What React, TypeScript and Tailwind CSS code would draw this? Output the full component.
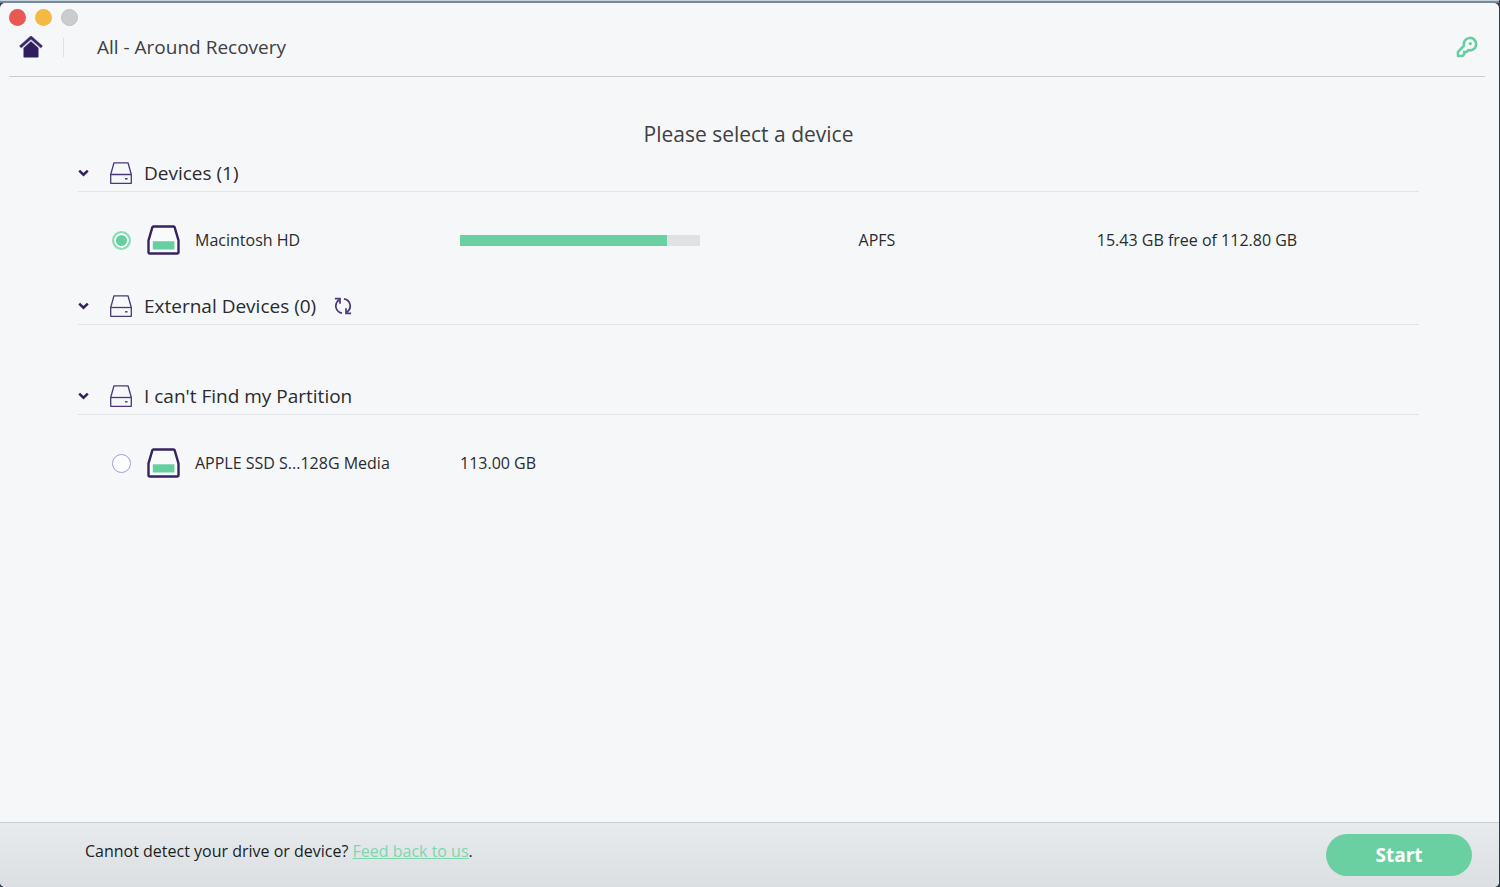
import { useState } from 'react'
import type { ReactNode } from 'react'

type Device = {
  id: string
  name: string
  used?: number
  format?: string
  size: string
}

const devices: Device[] = [
  { id: 'macintosh-hd', name: 'Macintosh HD', used: 86.3, format: 'APFS', size: '15.43 GB free of 112.80 GB' },
]

const partitions: Device[] = [
  { id: 'apple-ssd', name: 'APPLE SSD S...128G Media', size: '113.00 GB' },
]

function HomeIcon() {
  return (
    <svg width="24" height="23" viewBox="0 0 24 23" aria-hidden="true">
      <path d="M4.5 12 12 5.2l7.5 6.8v8.800a.7.7 0 0 1-.7.7H5.200a.7.7 0 0 1-.7-.7z" fill="#2f1e5e" />
      <path d="M1.400 11.200 12 1.700l10.600 9.500" fill="none" stroke="#c9c5d6" strokeWidth="4.2" />
      <path d="M1.200 11 12 1.500 22.800 11" fill="none" stroke="#3a2968" strokeWidth="2.600" />
    </svg>
  )
}

function KeyIcon() {
  return (
    <svg width="22" height="22" viewBox="0 0 22 22" fill="none" aria-hidden="true">
      <path
        d="M2 20v-4.2l6-6.1a6.2 6.2 0 1 1 4.4 4.4l-2 1.9H8.2v2.2L6.4 20z"
        stroke="#66cf9f"
        strokeWidth="2.6"
        strokeLinejoin="round"
      />
      <circle cx="14.3" cy="7.6" r="1.6" fill="#66cf9f" />
    </svg>
  )
}

function ChevronIcon() {
  return (
    <svg width="11" height="8" viewBox="0 0 11 8" fill="none" aria-hidden="true">
      <path d="M1.2 1.6 5.5 5.6l4.3-4" stroke="#33215f" strokeWidth="2.6" />
    </svg>
  )
}

function DriveIcon() {
  return (
    <svg width="22" height="22" viewBox="0 0 22 22" fill="none" stroke="#4b3878" aria-hidden="true">
      <path d="M.7 12.5 4 .8h14l3.3 11.7v8.8H.7z" strokeWidth="1.3" strokeLinejoin="round" />
      <path d="M.7 12.5h20.6" strokeWidth="1.3" />
      <path d="M15 16.8h2.6" strokeWidth="1.4" />
    </svg>
  )
}

function DiskIcon() {
  return (
    <svg width="33" height="30" viewBox="0 0 33 30" aria-hidden="true">
      <path
        d="M6.4 1.5h20.2a1 1 0 0 1 1 .7l3.900 13.300v11.800a1.200 1.200 0 0 1-1.200 1.200H2.700a1.200 1.200 0 0 1-1.200-1.200V15.500L5.400 2.200a1 1 0 0 1 1-.7z"
        fill="#f8fafc"
        stroke="#37235f"
        strokeWidth="2.4"
      />
      <path d="M5.800 16.300h21.600v8.200H5.800z" fill="#66cf9f" />
    </svg>
  )
}

function RefreshIcon() {
  return (
    <svg width="18" height="18" viewBox="0 0 18 18" fill="none" stroke="#4b3878" strokeWidth="1.7" aria-hidden="true">
      <path d="M8 16.2C1.6 15 -.6 7.2 5.2 2.6" />
      <path d="M.9 1.7h5.1v5" />
      <path d="M10 1.8c6.4 1.2 8.6 9 2.8 13.6" />
      <path d="M17.1 16.3H12v-5" />
    </svg>
  )
}

function Section({ title, action, children }: { title: string; action?: ReactNode; children?: ReactNode }) {
  const [open, setOpen] = useState(true)

  return (
    <section>
      <div className="flex h-[37px] items-center border-b border-[#e2e4e7]">
        <button type="button" aria-expanded={open} onClick={() => setOpen(!open)} className="flex items-center">
          <span className={open ? 'w-8' : 'w-8 opacity-60'}>
            <ChevronIcon />
          </span>
          <DriveIcon />
          <h2 className="ml-3 text-[19px] leading-6">{title}</h2>
        </button>
        {action}
      </div>
      {open && <ul className="min-h-[53px]">{children}</ul>}
    </section>
  )
}

function DeviceRow({ device, checked, onSelect }: { device: Device; checked: boolean; onSelect: () => void }) {
  return (
    <li>
      <label className="grid h-24 grid-cols-[382px_297fr_240fr_400fr_22px] items-center text-[16px] leading-6">
        <span className="flex items-center pl-[34px]">
          <input
            type="radio"
            name="device"
            checked={checked}
            onChange={onSelect}
            className="size-[19px] appearance-none rounded-full border border-[#a79dc4] bg-[#fbfeff] checked:border-2 checked:border-[#8cdcb8] checked:bg-[#66cf9f] checked:shadow-[inset_0_0_0_2px_#f8fdfc]"
          />
          <span className="mr-[15px] ml-4">
            <DiskIcon />
          </span>
          {device.name}
        </span>
        {device.used !== undefined ? (
          <span className="block h-[11px] w-60 bg-[#dfe2e5]">
            <span className="block h-full bg-[#6bd0a1]" style={{ width: `${device.used}%` }} />
          </span>
        ) : (
          <span>{device.size}</span>
        )}
        {device.format && <span className="text-center">{device.format}</span>}
        {device.used !== undefined && <span className="text-center">{device.size}</span>}
      </label>
    </li>
  )
}

export default function App() {
  const [selected, setSelected] = useState('macintosh-hd')

  const renderRow = (device: Device) => (
    <DeviceRow
      key={device.id}
      device={device}
      checked={selected === device.id}
      onSelect={() => setSelected(device.id)}
    />
  )

  return (
    <div className="flex min-h-screen flex-col bg-[#2d3a52] pr-px font-['Open_Sans','Noto_Sans',sans-serif] text-[#2a2b2e]">
      <div className="h-[3px] border-t border-[#c5d2da] bg-[#748a9c]" />
      <div className="flex grow flex-col overflow-hidden rounded-[5px] bg-[#f5f7f9]">
        <header className="pr-[14px] pl-[9px]">
          <div className="flex gap-[9px] pt-[6px]">
            <button type="button" aria-label="Close" className="size-[17px] rounded-full bg-[#e95852]" />
            <button type="button" aria-label="Minimize" className="size-[17px] rounded-full bg-[#f4b942]" />
            <button type="button" aria-label="Zoom" className="size-[17px] rounded-full border border-[#bfc2c2] bg-[#cacdcd]" />
          </div>
          <div className="flex h-[51px] items-center border-b border-[#c9cccf] pb-2 text-[#3f4043]">
            <button type="button" aria-label="Home" className="ml-[10px]">
              <HomeIcon />
            </button>
            <span className="ml-5 h-[19px] w-px bg-[#dde0e4]" />
            <h1 className="ml-[33px] text-[19px] leading-6">All - Around Recovery</h1>
            <button type="button" aria-label="License key" className="mr-[7px] ml-auto">
              <KeyIcon />
            </button>
          </div>
        </header>

        <main className="grow pr-20 pl-[78px]">
          <p className="pt-[42px] pb-[6px] text-center text-[21px] leading-[30px] text-[#3f4043]">Please select a device</p>
          <Section title="Devices (1)">{devices.map(renderRow)}</Section>
          <Section
            title="External Devices (0)"
            action={
              <button type="button" aria-label="Refresh" className="ml-[18px]">
                <RefreshIcon />
              </button>
            }
          />
          <Section title="I can't Find my Partition">{partitions.map(renderRow)}</Section>
        </main>

        <footer className="flex h-[65px] items-center justify-between border-t border-[#c9cdd0] bg-linear-to-b from-[#e7ebee] to-[#dbdfe2] pr-[27px] pl-[85px]">
          <p className="pb-2 text-[16px] leading-6 text-[#1c1d1f]">
            Cannot detect your drive or device?{' '}
            <a href="#feedback" className="text-[#7fd6ae] underline">
              Feed back to us
            </a>
            .
          </p>
          <button type="button" className="h-[42px] w-[146px] rounded-full bg-[#6bd0a1] text-[19px] font-bold text-white">
            Start
          </button>
        </footer>
      </div>
    </div>
  )
}
